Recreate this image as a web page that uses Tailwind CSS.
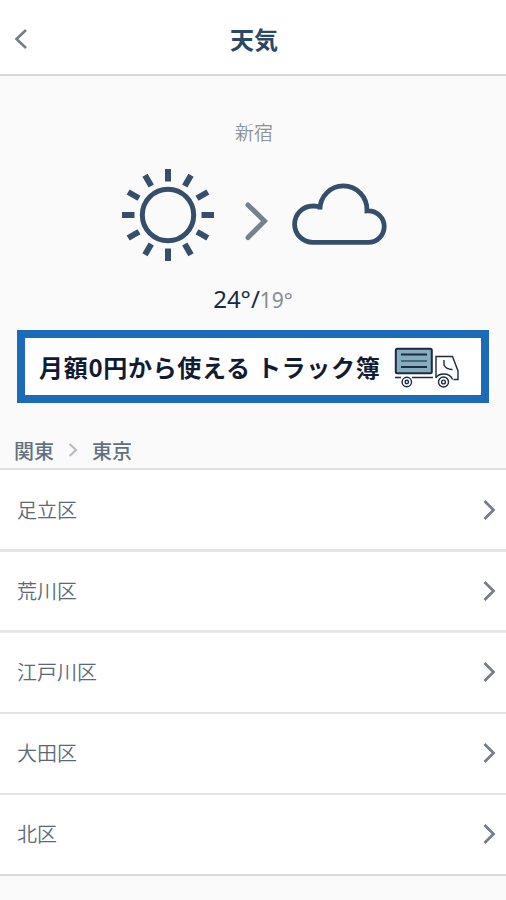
<!DOCTYPE html>
<html lang="ja">
<head>
<meta charset="utf-8">
<title>天気</title>
<script src="https://cdn.jsdelivr.net/npm/@tailwindcss/browser@4"></script>
</head>
<body class="bg-[#fafafa] font-['Noto_Sans_CJK_JP',sans-serif] text-[#3f536b]">
<div class="flex h-[900px] w-[506px] flex-col overflow-hidden">
  <header class="grid h-[76px] shrink-0 grid-cols-[1fr_auto_1fr] items-center border-b-2 border-[#d6d7d8] bg-white px-[14px]">
    <svg class="mt-[3px] h-5 w-[13px]" viewBox="0 0 13 20" fill="none" stroke="#747c87" stroke-width="2.6"><path d="M12 1 2.500 10l9.500 9"/></svg>
    <h1 class="mt-[3px] pl-[2px] text-2xl leading-9 font-bold text-[#2b4766]">天気</h1>
    <span></span>
  </header>

  <main class="flex flex-col">
    <section class="flex h-[254px] flex-col items-center pt-[42px]">
      <p class="pl-[2px] text-[19px] leading-7 font-[350] text-[#8b9299]">新宿</p>
      <div class="mt-[22px] flex w-full items-center pl-[121px]">
        <svg class="h-[94px] w-[94px]" viewBox="-47 -47 94 94" fill="none" stroke="#354f6b" stroke-width="5">
          <circle r="25.700"/>
          <path id="ray" d="M0-46v12.500M0 46V33.500" stroke-width="6"/>
          <use href="#ray" transform="rotate(30)"/>
          <use href="#ray" transform="rotate(60)"/>
          <use href="#ray" transform="rotate(90)"/>
          <use href="#ray" transform="rotate(120)"/>
          <use href="#ray" transform="rotate(150)"/>
        </svg>
        <svg class="mt-[11px] ml-[29px] h-10 w-6" viewBox="0 0 24 40" fill="none" stroke="#76818f" stroke-width="5" stroke-linecap="round"><path d="M4 4 20.500 20 4 36.500"/></svg>
        <svg class="ml-6 h-[64px] w-[96px]" viewBox="0 0 96 64" fill="none" stroke="#354f6b" stroke-width="4.800"><path d="M27.900 26.500A23.400 23.700 0 0 1 51.200 2.900A23.600 24 0 0 1 75 27.900A15.800 15.800 0 0 1 76.400 27.800A15.800 15.800 0 0 1 76.400 59.400H20.800A18.200 18.200 0 0 1 20.800 23Q25 22.900 29.500 24.500"/></svg>
      </div>
      <p class="mt-[18px] text-[22px] leading-9 font-normal text-[#152b43]"><span class="font-['Noto_Sans'] text-[24px]">24°/</span><span class="font-['Noto_Sans'] text-[21px] font-normal text-[#858d95]">19°</span></p>
    </section>

    <a class="mx-[17px] flex h-[73px] items-center border-8 border-[#1b6bb8] bg-white pl-[14px] text-[#111c33]">
      <span class="text-[24px] font-bold tracking-[0.700px] whitespace-pre">月額0円から使える トラック簿</span>
      <svg class="ml-[13px] h-[44px] w-[68px] shrink-0" viewBox="395 345 68 44" fill="none" stroke="#1c2b40" stroke-width="1.400">
        <rect x="397.800" y="348.800" width="36" height="24.500" rx="1.500" fill="#86adbf" stroke-width="2"/>
        <path d="M403 354.500h26M403 367h26" stroke-width="2"/><path d="M403 361h26" stroke="#486879" stroke-width="2"/>
        <path d="M397 377.500h6M414 377.500h21M438 378V356.500h16.500L460 371v8.500h-4.500M446 360v5q2 4.500 8.500 4.500M438 378q2-4 7.500-4 7 0 9 5.500"/>
        <circle cx="408.800" cy="382" r="4.700"/><circle cx="408.800" cy="382" r="1.700"/>
        <circle cx="445.500" cy="382" r="5"/><circle cx="445.500" cy="382" r="1.900"/>
      </svg>
    </a>

    <nav class="flex h-[67px] items-end border-b-2 border-[#dfe0e1] pb-[3px] pl-[14px] text-[20px] leading-7 font-medium text-[#63717f]">
      <span>関東</span>
      <svg class="mx-[14px] mb-2 h-[14px] w-[10px]" viewBox="0 0 10 14" fill="none" stroke="#b9bdc1" stroke-width="2.200"><path d="m1.500 1 6.500 6-6.500 6"/></svg>
      <span>東京</span>
    </nav>

    <ul class="bg-white text-[20px] font-[350] text-[#5b6977]">
      <li class="flex h-[82px] items-center justify-between border-b-3 border-[#e5e6e7] pr-[10px] pl-[17px]"><span>足立区</span><svg class="h-5 w-[13px]" viewBox="0 0 13 20" fill="none" stroke="#757d87" stroke-width="2.700"><path d="m1.500 1 9 9-9 9"/></svg></li>
      <li class="flex h-[81px] items-center justify-between border-b-3 border-[#e5e6e7] pr-[10px] pl-[17px]"><span>荒川区</span><svg class="h-5 w-[13px]" viewBox="0 0 13 20" fill="none" stroke="#757d87" stroke-width="2.700"><path d="m1.500 1 9 9-9 9"/></svg></li>
      <li class="flex h-[81px] items-center justify-between border-b-2 border-[#e1e2e3] pr-[10px] pb-[2px] pl-[17px]"><span>江戸川区</span><svg class="h-5 w-[13px]" viewBox="0 0 13 20" fill="none" stroke="#757d87" stroke-width="2.700"><path d="m1.500 1 9 9-9 9"/></svg></li>
      <li class="flex h-[81px] items-center justify-between border-b-2 border-[#e1e2e3] pr-[10px] pb-[2px] pl-[17px]"><span>大田区</span><svg class="h-5 w-[13px]" viewBox="0 0 13 20" fill="none" stroke="#757d87" stroke-width="2.700"><path d="m1.500 1 9 9-9 9"/></svg></li>
      <li class="flex h-[81px] items-center justify-between border-b-2 border-[#d9dadb] pr-[10px] pb-[2px] pl-[17px]"><span>北区</span><svg class="h-5 w-[13px]" viewBox="0 0 13 20" fill="none" stroke="#757d87" stroke-width="2.700"><path d="m1.500 1 9 9-9 9"/></svg></li>
    </ul>
  </main>
</div>
</body>
</html>
